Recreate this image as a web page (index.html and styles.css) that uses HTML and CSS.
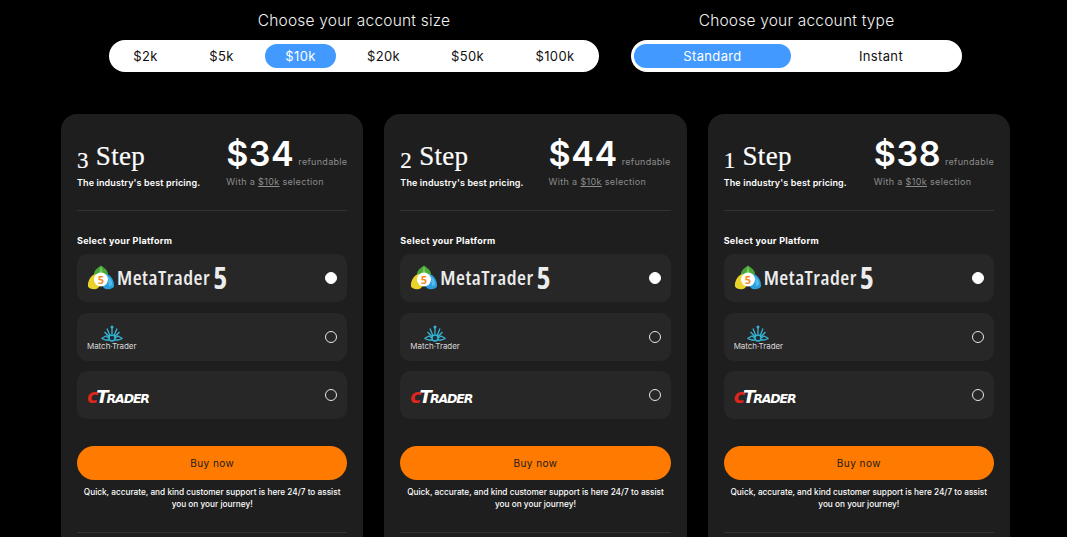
FILE: index.html
```html
<!DOCTYPE html>
<html lang="en">
<head>
<meta charset="utf-8">
<title>Choose your account</title>
<link rel="stylesheet" href="styles.css">
</head>
<body>
<svg class="defs" width="0" height="0" aria-hidden="true">
  <defs>
    <symbol id="mt-icon" viewBox="0 0 28 26">
      <path d="M14 .5c2.500 2.200 6.500 3.800 7 8.500.2 2-.5 4-2 5H9c-1.500-1-2.200-3-2-5 .5-4.700 4.500-6.300 7-8.500z" fill="#4aa83a"/>
      <path d="M14 1.500c-1 2-1.500 4.500-1.500 8h3c0-3.500-.5-6-1.500-8z" fill="#7cc85a"/>
      <path d="M1 21.500C.6 17 2.600 12 7 9.500c2-.8 4 .5 5 2.500l1 8c-1 3-3.500 4.500-6 4.300-2.700-.2-5-1-6-2.800z" fill="#e9d22c"/>
      <path d="M27 21.500c.4-4.500-1.600-9.500-6-12-2-.8-4 .5-5 2.500l-1 8c1 3 3.500 4.500 6 4.300 2.700-.2 5-1 6-2.800z" fill="#2b9fdc"/>
      <path d="M21 11.500c2.500 1.500 4 4.500 4.300 8l-3.300 2z" fill="#55bcec"/>
      <circle cx="14" cy="14.500" r="7" fill="#fff"/>
      <text x="14" y="18.800" text-anchor="middle" class="mt-five">5</text>
    </symbol>
    <symbol id="mtr-icon" viewBox="0 0 24 17">
      <g fill="none" stroke="#35b6d6" stroke-width="1.300">
        <path d="M12 9V2.500M10 11 7 3.500M14 11l3-7.500M9.500 12 4.500 7M14.500 12l5-5"/>
        <path d="M1.500 13.500 6 11l3.500 2.500M22.500 13.500 18 11l-3.500 2.500M1.500 13.500 6 15h3M22.500 13.500 18 15h-3"/>
      </g>
      <circle cx="12" cy="2" r="1.500" fill="#35b6d6"/>
      <circle cx="12" cy="13" r="3" fill="#16333b" stroke="#35b6d6" stroke-width="1.300"/>
    </symbol>
  </defs>
</svg>

<main class="page">
  <section class="selectors">
    <div class="selector">
      <h2 class="selector-title">Choose your account size</h2>
      <div class="pill pill-size">
        <span class="opt">$2k</span>
        <span class="opt">$5k</span>
        <span class="opt opt-active">$10k</span>
        <span class="opt">$20k</span>
        <span class="opt">$50k</span>
        <span class="opt">$100k</span>
      </div>
    </div>
    <div class="selector">
      <h2 class="selector-title">Choose your account type</h2>
      <div class="pill pill-type">
        <span class="opt opt-active">Standard</span>
        <span class="opt">Instant</span>
      </div>
    </div>
  </section>

  <section class="cards">
    <article class="card">
      <header class="card-head">
        <div class="plan">
          <h3 class="plan-name"><span class="num">3</span> Step</h3>
          <p class="plan-tag">The industry's best pricing.</p>
        </div>
        <div class="cost">
          <div class="cost-line"><span class="price">$34</span><span class="refund">refundable</span></div>
          <p class="cost-note">With a <u>$10k</u> selection</p>
        </div>
      </header>
      <h4 class="platform-title">Select your Platform</h4>
      <div class="platforms">
        <div class="platform">
          <span class="logo-mt"><svg class="mt-svg"><use href="#mt-icon"/></svg><span class="mt-text">MetaTrader</span><span class="mt-num">5</span></span>
          <span class="radio radio-on"></span>
        </div>
        <div class="platform">
          <span class="logo-mtr"><svg class="mtr-svg"><use href="#mtr-icon"/></svg><span class="mtr-text">Match·Trader</span></span>
          <span class="radio"></span>
        </div>
        <div class="platform">
          <span class="logo-ct"><span class="ct-c">c</span><span class="ct-t">T</span><span class="ct-small">RADER</span></span>
          <span class="radio"></span>
        </div>
      </div>
      <button class="buy" type="button">Buy now</button>
      <p class="support">Quick, accurate, and kind customer support is here 24/7 to assist you on your journey!</p>
      <div class="rule"></div>
    </article>

    <article class="card">
      <header class="card-head">
        <div class="plan">
          <h3 class="plan-name"><span class="num">2</span> Step</h3>
          <p class="plan-tag">The industry's best pricing.</p>
        </div>
        <div class="cost">
          <div class="cost-line"><span class="price">$44</span><span class="refund">refundable</span></div>
          <p class="cost-note">With a <u>$10k</u> selection</p>
        </div>
      </header>
      <h4 class="platform-title">Select your Platform</h4>
      <div class="platforms">
        <div class="platform">
          <span class="logo-mt"><svg class="mt-svg"><use href="#mt-icon"/></svg><span class="mt-text">MetaTrader</span><span class="mt-num">5</span></span>
          <span class="radio radio-on"></span>
        </div>
        <div class="platform">
          <span class="logo-mtr"><svg class="mtr-svg"><use href="#mtr-icon"/></svg><span class="mtr-text">Match·Trader</span></span>
          <span class="radio"></span>
        </div>
        <div class="platform">
          <span class="logo-ct"><span class="ct-c">c</span><span class="ct-t">T</span><span class="ct-small">RADER</span></span>
          <span class="radio"></span>
        </div>
      </div>
      <button class="buy" type="button">Buy now</button>
      <p class="support">Quick, accurate, and kind customer support is here 24/7 to assist you on your journey!</p>
      <div class="rule"></div>
    </article>

    <article class="card">
      <header class="card-head">
        <div class="plan">
          <h3 class="plan-name"><span class="num">1</span> Step</h3>
          <p class="plan-tag">The industry's best pricing.</p>
        </div>
        <div class="cost">
          <div class="cost-line"><span class="price">$38</span><span class="refund">refundable</span></div>
          <p class="cost-note">With a <u>$10k</u> selection</p>
        </div>
      </header>
      <h4 class="platform-title">Select your Platform</h4>
      <div class="platforms">
        <div class="platform">
          <span class="logo-mt"><svg class="mt-svg"><use href="#mt-icon"/></svg><span class="mt-text">MetaTrader</span><span class="mt-num">5</span></span>
          <span class="radio radio-on"></span>
        </div>
        <div class="platform">
          <span class="logo-mtr"><svg class="mtr-svg"><use href="#mtr-icon"/></svg><span class="mtr-text">Match·Trader</span></span>
          <span class="radio"></span>
        </div>
        <div class="platform">
          <span class="logo-ct"><span class="ct-c">c</span><span class="ct-t">T</span><span class="ct-small">RADER</span></span>
          <span class="radio"></span>
        </div>
      </div>
      <button class="buy" type="button">Buy now</button>
      <p class="support">Quick, accurate, and kind customer support is here 24/7 to assist you on your journey!</p>
      <div class="rule"></div>
    </article>
  </section>
</main>
</body>
</html>
```

FILE: styles.css
```css
* { box-sizing: border-box; }
html, body { height: 537px; overflow: hidden; }
body {
  margin: 0;
  background: #000;
  color: #fff;
  font-family: "Inter", "Liberation Sans", sans-serif;
}
.defs { position: absolute; }
p, h2, h3, h4 { margin: 0; font-weight: 400; }

.page { padding: 10px 57px 0 61px; }

.selectors {
  display: flex;
  justify-content: center;
  gap: 32px;
  padding-left: 8px;
  padding-right: 8px;
  margin-bottom: 42px;
}
.selector { display: flex; flex-direction: column; align-items: center; gap: 8px; }
.selector-title {
  font-size: 15.5px;
  line-height: 22px;
  font-weight: 300;
  letter-spacing: 0.2px;
  color: #f2f2f2;
}
.pill {
  display: grid;
  align-items: center;
  height: 32px;
  background: #fff;
  border-radius: 16px;
  color: #111;
  font-size: 13px;
  letter-spacing: 0.35px;
}
.pill-size {
  width: 490px;
  padding: 0 4px;
  column-gap: 11px;
  grid-template-columns: 65px 65px 71px 73px 73px 80px;
}
.pill-type {
  width: 331px;
  padding: 0 3px;
  column-gap: 12px;
  grid-template-columns: 157px 1fr;
}
.opt { display: block; height: 24px; line-height: 24px; text-align: center; }
.opt-active { background: #4299ff; color: #fff; border-radius: 12px; }

.cards { display: flex; gap: 21px; }
.card {
  flex: 1 1 0;
  min-width: 0;
  height: 440px;
  padding: 0 16px;
  background: #1e1e1e;
  border-radius: 16px;
}
.card-head {
  display: flex;
  justify-content: space-between;
  height: 97px;
  padding-top: 19px;
  border-bottom: 1px solid #333;
}
.plan-name {
  font-family: "Liberation Serif", serif;
  font-size: 27px;
  line-height: 30px;
  margin-top: 8px;
  letter-spacing: 0.3px;
  color: #fff;
  -webkit-text-stroke: 0.2px #fff;
}
.num { font-size: 23px; position: relative; top: 3px; }
.plan-tag {
  font-size: 9px;
  line-height: 12px;
  margin-top: 4px;
  font-weight: 600;
  letter-spacing: 0.12px;
  color: #fff;
}
.cost { display: flex; flex-direction: column; }
.cost-line { display: flex; align-items: baseline; gap: 4px; height: 41px; }
.price { font-size: 34px; line-height: 41px; font-weight: 600; letter-spacing: 0.6px; }
.refund { font-size: 9px; color: #8c8c8c; letter-spacing: 0.3px; position: relative; top: -1px; }
.cost-note { font-size: 9px; line-height: 12px; margin-top: 2px; color: #8c8c8c; letter-spacing: 0.35px; }

.platform-title {
  font-size: 9px;
  line-height: 12px;
  font-weight: 700;
  letter-spacing: 0.3px;
  margin-top: 24px;
}
.platforms { display: flex; flex-direction: column; gap: 10.5px; margin-top: 7px; }
.platform {
  display: flex;
  align-items: center;
  justify-content: space-between;
  height: 48px;
  padding: 0 10px;
  background: #272727;
  border-radius: 10px;
}
.radio {
  width: 12px;
  height: 12px;
  border: 1px solid #e6e6e6;
  border-radius: 50%;
}
.radio-on { background: #fff; border-color: #fff; }

.logo-mt { display: flex; align-items: center; }
.mt-svg { width: 28px; height: 26px; }
.mt-five { font: 700 11px "Open Sans", sans-serif; fill: #f28c1e; }
.mt-text {
  font-family: "Open Sans", sans-serif;
  font-weight: 600;
  font-stretch: 75%;
  font-size: 20.5px;
  letter-spacing: 0.5px;
  line-height: 24px;
  color: #ececec;
  margin-left: 2px;
  margin-top: -3px;
}
.mt-num {
  font-family: "Open Sans", sans-serif;
  font-weight: 700;
  font-stretch: 75%;
  font-size: 30px;
  line-height: 26px;
  color: #ececec;
  margin-left: 3px;
}
.logo-mtr { display: flex; flex-direction: column; align-items: center; margin-top: 3px; }
.mtr-svg { width: 24px; height: 17px; }
.mtr-text { font-size: 8px; line-height: 9px; color: #d8d8d8; letter-spacing: -0.05px; }
.logo-ct {
  font-family: "DejaVu Sans", sans-serif;
  font-weight: 700;
  font-style: italic;
  line-height: 20px;
  color: #fff;
  display: flex;
  align-items: baseline;
  margin-top: 4px;
}
.ct-c { color: #e0261c; font-size: 19px; margin-right: -2px; }
.ct-t { font-size: 18px; margin-right: -2px; }
.ct-small { font-size: 12.5px; letter-spacing: -1.1px; }

.buy {
  display: block;
  width: 100%;
  height: 34px;
  margin-top: 27px;
  padding: 0;
  border: 0;
  border-radius: 17px;
  background: #ff7a00;
  color: #1a1a1a;
  font-family: inherit;
  font-size: 10px;
  letter-spacing: 0.45px;
}
.support {
  font-size: 8.25px;
  line-height: 12px;
  font-weight: 500;
  text-align: center;
  margin-top: 6px;
  color: #fff;
}
.rule { height: 1px; margin-top: 22px; background: #333; }
```
